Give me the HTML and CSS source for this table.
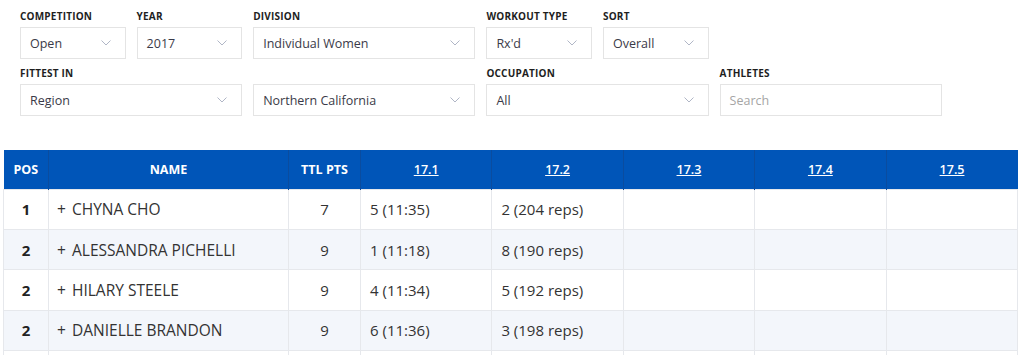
FILE: index.html
```html
<!DOCTYPE html>
<html>
<head>
<meta charset="utf-8">
<link rel="stylesheet" href="styles.css">
</head>
<body>
<div class="filters">
  <div class="field r1">
    <div class="label">Competition</div>
    <div class="select"><span>Open</span><svg class="chev" width="10" height="6" viewBox="0 0 10 6"><polyline points="0.5,0.5 5,5 9.5,0.5"/></svg></div>
  </div>
  <div class="field r1">
    <div class="label">Year</div>
    <div class="select"><span>2017</span><svg class="chev" width="10" height="6" viewBox="0 0 10 6"><polyline points="0.5,0.5 5,5 9.5,0.5"/></svg></div>
  </div>
  <div class="field r1 c2">
    <div class="label">Division</div>
    <div class="select"><span>Individual Women</span><svg class="chev" width="10" height="6" viewBox="0 0 10 6"><polyline points="0.5,0.5 5,5 9.5,0.5"/></svg></div>
  </div>
  <div class="field r1">
    <div class="label">Workout Type</div>
    <div class="select"><span>Rx'd</span><svg class="chev" width="10" height="6" viewBox="0 0 10 6"><polyline points="0.5,0.5 5,5 9.5,0.5"/></svg></div>
  </div>
  <div class="field r1">
    <div class="label">Sort</div>
    <div class="select"><span>Overall</span><svg class="chev" width="10" height="6" viewBox="0 0 10 6"><polyline points="0.5,0.5 5,5 9.5,0.5"/></svg></div>
  </div>
  <div class="field r2 c2">
    <div class="label">Fittest In</div>
    <div class="select"><span>Region</span><svg class="chev" width="10" height="6" viewBox="0 0 10 6"><polyline points="0.5,0.5 5,5 9.5,0.5"/></svg></div>
  </div>
  <div class="field r2 c2">
    <div class="label">&nbsp;</div>
    <div class="select"><span>Northern California</span><svg class="chev" width="10" height="6" viewBox="0 0 10 6"><polyline points="0.5,0.5 5,5 9.5,0.5"/></svg></div>
  </div>
  <div class="field r2 c2">
    <div class="label">Occupation</div>
    <div class="select"><span>All</span><svg class="chev" width="10" height="6" viewBox="0 0 10 6"><polyline points="0.5,0.5 5,5 9.5,0.5"/></svg></div>
  </div>
  <div class="field r2 c2">
    <div class="label">Athletes</div>
    <div class="select search"><span>Search</span></div>
  </div>
</div>

<table class="board">
  <colgroup>
    <col class="w-pos"><col class="w-name"><col class="w-pts"><col><col><col><col><col>
  </colgroup>
  <thead>
    <tr>
      <th>POS</th><th>NAME</th><th>TTL PTS</th>
      <th><a>17.1</a></th><th><a>17.2</a></th><th><a>17.3</a></th><th><a>17.4</a></th><th><a>17.5</a></th>
    </tr>
  </thead>
  <tbody>
    <tr>
      <td class="pos">1</td><td class="name"><span class="plus">+</span>CHYNA CHO</td><td class="pts">7</td>
      <td class="sc">5 (11:35)</td><td class="sc">2 (204 reps)</td><td></td><td></td><td></td>
    </tr>
    <tr>
      <td class="pos">2</td><td class="name"><span class="plus">+</span>ALESSANDRA PICHELLI</td><td class="pts">9</td>
      <td class="sc">1 (11:18)</td><td class="sc">8 (190 reps)</td><td></td><td></td><td></td>
    </tr>
    <tr>
      <td class="pos">2</td><td class="name"><span class="plus">+</span>HILARY STEELE</td><td class="pts">9</td>
      <td class="sc">4 (11:34)</td><td class="sc">5 (192 reps)</td><td></td><td></td><td></td>
    </tr>
    <tr>
      <td class="pos">2</td><td class="name"><span class="plus">+</span>DANIELLE BRANDON</td><td class="pts">9</td>
      <td class="sc">6 (11:36)</td><td class="sc">3 (198 reps)</td><td></td><td></td><td></td>
    </tr>
    <tr class="empty">
      <td></td><td></td><td></td><td></td><td></td><td></td><td></td><td></td>
    </tr>
  </tbody>
</table>
</body>
</html>
```

FILE: styles.css
```css
* { box-sizing: border-box; }

body {
  margin: 0;
  background: #fff;
  font-family: "Open Sans", "Noto Sans", sans-serif;
  color: #333;
  overflow: hidden;
}

.filters {
  display: grid;
  grid-template-columns: repeat(8, 105.6px);
  column-gap: 11px;
  row-gap: 7px;
  padding: 9px 0 0 20px;
}

.field.r1 { grid-row: 1; }
.field.r2 { grid-row: 2; }
.field.c2 { grid-column: span 2; }

.label {
  font-size: 10px;
  font-weight: 700;
  line-height: 15px;
  height: 15px;
  margin-bottom: 3px;
  letter-spacing: 0.2px;
  text-transform: uppercase;
  color: #1e1e1e;
}

.select {
  height: 32px;
  border: 1px solid #e4e4e4;
  background: #fff;
  display: flex;
  align-items: center;
  justify-content: space-between;
  padding: 0 14px 0 9px;
  font-size: 12.5px;
  color: #3a3a48;
}

.select.search span { color: #a5a5a5; }

.chev {
  display: block;
  fill: none;
  stroke: #b0b6c6;
  stroke-width: 1;
}

.board {
  margin: 34px 0 0 3px;
  width: 1015px;
  border-collapse: collapse;
  table-layout: fixed;
}

.w-pos { width: 45px; }
.w-name { width: 240px; }
.w-pts { width: 72px; }

.board th {
  background: #0055b8;
  color: #fff;
  height: 39px;
  font-size: 12.5px;
  font-weight: 700;
  text-align: center;
  border-left: 1px solid #0a4c9f;
  padding: 0;
}
.board th:first-child { border-left: none; }

.board th a {
  color: #fff;
  text-decoration: underline;
  font-weight: 600;
}

.board td {
  height: 40.4px;
  border: 1px solid #e6e8ec;
  font-size: 15px;
  color: #333;
  padding: 0 9px;
}

.board tbody tr:nth-child(even) td { background: #f3f6fb; }

.board td.pos {
  text-align: center;
  font-weight: 700;
  color: #222;
}

.board td.name {
  padding-left: 8px;
  font-size: 15.5px;
}
.plus {
  display: inline-block;
  width: 15px;
}
.board td.pts { text-align: center; }
```
